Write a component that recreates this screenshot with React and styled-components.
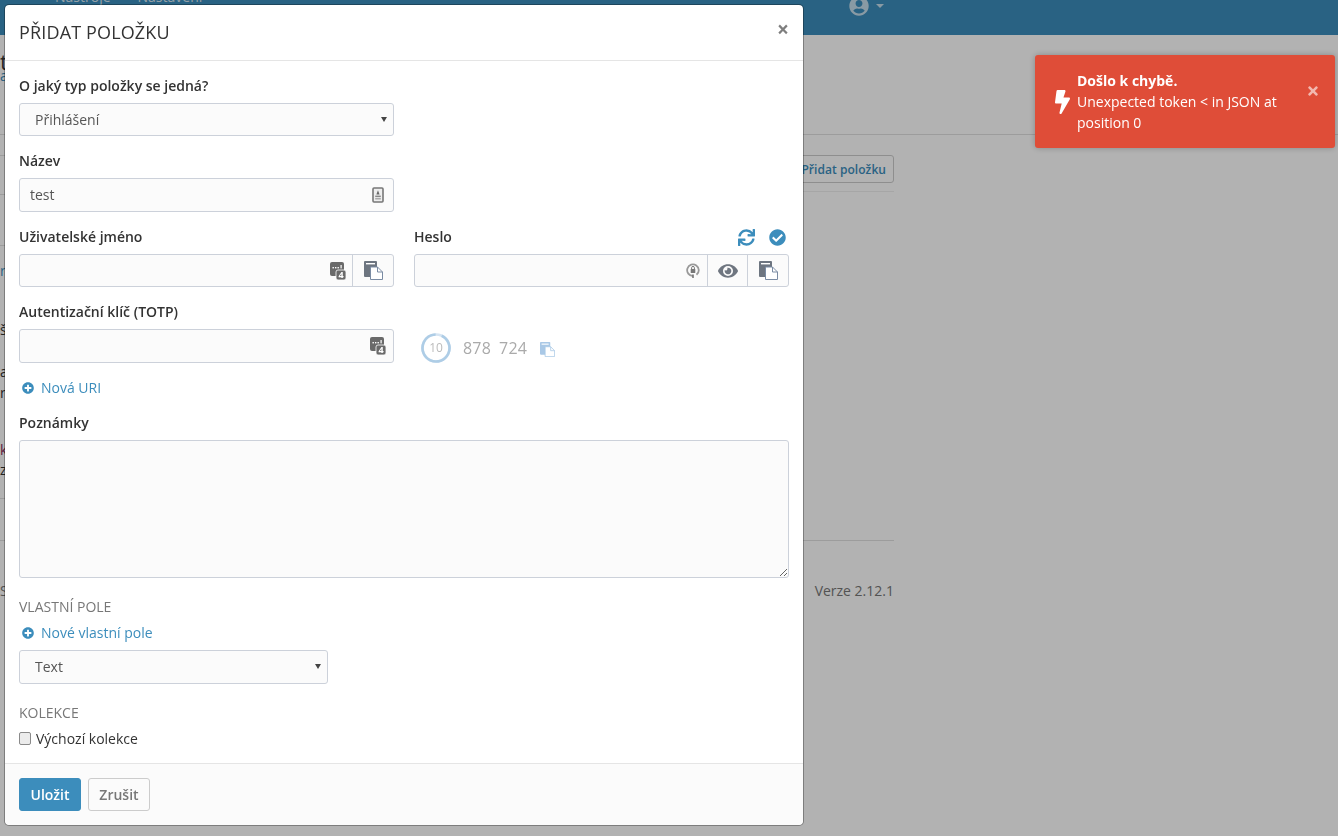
import React from 'react';
import styled, { createGlobalStyle } from 'styled-components';
import { FaSync, FaCheckCircle, FaEye, FaPlusCircle, FaBolt, FaTimes, FaUserCircle } from 'react-icons/fa';

const Global = createGlobalStyle`
  html, body { margin: 0; padding: 0; background: #fff; }
  body { font-family: "Open Sans", "Noto Sans", sans-serif; font-size: 14px; line-height: 20px; color: #333; overflow: hidden; }
  * { box-sizing: border-box; }
`;

const Page = styled.div`width: 1338px; height: 836px; overflow: hidden; display: flex; flex-direction: column;`;
const Nav = styled.nav`
  height: 35px; flex: none; background: #3c8dbc; overflow: hidden; width: 100%;
`;
const NavInner = styled.div`
  width: 894px; display: flex; justify-content: space-between; align-items: flex-start; padding: 0 12px 0 55px;
`;
const NavLinks = styled.div`display: flex; gap: 27px; margin-top: -13px; color: rgba(255,255,255,.8);`;
const UserMenu = styled.div`display: flex; align-items: center; gap: 7px; margin: -4px -2px 0 0; color: rgba(255,255,255,.7); font-size: 20px; height: 20px;`;
const Caret = styled.span`width: 0; height: 0; border-left: 4px solid transparent; border-right: 4px solid transparent; border-top: 4px solid currentColor;`;

const PageHead = styled.header`height: 100px; flex: none; border-bottom: 1px solid #e0e0e0; padding-top: 19px;`;
const HeadTitle = styled.div`font-size: 22px; line-height: 15px; color: #333;`;
const HeadSub = styled.div`font-size: 14px; line-height: 14px; color: #3c8dbc;`;

const Main = styled.main`width: 894px; display: flex; justify-content: space-between;`;
const Rail = styled.div`width: 30px; display: flex; flex-direction: column;`;
const RailRow = styled.div`
  height: ${p => p.$h}px; line-height: ${p => p.$h}px; flex: none; color: ${p => p.$c || '#333'};
  border-bottom: ${p => (p.$line ? '1px solid #e0e0e0' : 'none')};
`;
const Right = styled.div`width: 500px; display: flex; flex-direction: column;`;
const Toolbar = styled.div`height: 57px; padding-top: 20px; border-bottom: 1px solid #eee; display: flex; justify-content: flex-end; align-items: flex-start;`;
const AddBtn = styled.button`
  height: 28px; padding: 0 7px 0 8px; border: 1px solid #ccc; border-radius: 3px; background: transparent;
  font: 600 12px "Open Sans", sans-serif; letter-spacing: .05px; color: #3c8dbc;
`;
const Rule = styled.div`height: 349px; border-bottom: 1px solid #e0e0e0;`;
const Version = styled.div`margin-top: 40px; text-align: right; color: #777;`;

const Backdrop = styled.div`position: fixed; inset: 0; background: rgba(0,0,0,.3);`;
const ModalLayer = styled.div`position: fixed; inset: 0; padding: 4px;`;
const Modal = styled.div`
  width: 800px; height: 822px; background: #fff; border: 1px solid rgba(0,0,0,.3); border-radius: 5px;
  background-clip: padding-box; display: flex; flex-direction: column;
`;
const ModalHead = styled.div`
  height: 56px; flex: none; display: flex; align-items: center; justify-content: space-between;
  padding: 0 14px; border-bottom: 1px solid #e5e5e5;
`;
const Title = styled.h4`margin: -2px 0 0; font-size: 18px; font-weight: 400; line-height: 20px; letter-spacing: .15px; text-transform: uppercase; color: #333;`;
const Close = styled.button`
  border: 0; background: none; padding: 0; font: 700 21px/21px "Open Sans", sans-serif; color: #000; opacity: .5; margin-top: -6px;
`;
const ModalBody = styled.div`flex: 1; padding: 15px 14px 0; display: flex; flex-direction: column; gap: 15px;`;
const Grid = styled.div`display: grid; grid-template-columns: 375px 375px; column-gap: 20px;`;
const Field = styled.div`display: flex; flex-direction: column; gap: 7px;`;
const LabelRow = styled.div`display: flex; justify-content: space-between; align-items: center; height: 20px;`;
const Label = styled.label`font-weight: 600; font-size: 14px; line-height: 20px; color: #333;`;
const TopIcons = styled.div`display: flex; gap: 14px; padding-right: 3px; color: #3c8dbc; font-size: 17px; align-items: center;`;

const Group = styled.div`
  height: ${p => p.$h || 33}px; width: ${p => p.$w ? `${p.$w}px` : '100%'}; display: flex; align-items: stretch;
  padding-bottom: ${p => (p.$h === 34 ? 1 : 0)}px;
  border: 1px solid #ccd1da; border-radius: 3px; background: #fbfbfb; position: relative;
`;
const TextInput = styled.input`
  flex: 1; min-width: 0; border: 0; background: transparent; padding: 0 10px; outline: none;
  font: 14px "Open Sans", sans-serif; color: #555;
`;
const Inset = styled.span`display: flex; align-items: center; padding-right: ${p => p.$pr}px; flex: none;`;
const Addon = styled.button`
  width: ${p => p.$w}px; flex: none; border: 0; border-left: 1px solid #ccd1da; background: transparent; padding: 0;
  display: flex; align-items: center; justify-content: center; color: #6f7680; font-size: 20px;
`;
const SelectEl = styled.select`
  appearance: none; -webkit-appearance: none; flex: 1; border: 0; background: transparent; outline: none;
  padding: 0 15px; font: 14px "Open Sans", sans-serif; color: #555;
`;
const SelectArrow = styled.span`
  position: absolute; right: 6px; top: 50%; margin-top: -3px; width: 0; height: 0; pointer-events: none;
  border-left: 3px solid transparent; border-right: 3px solid transparent; border-top: 5px solid #444;
`;
const TextArea = styled.textarea`
  height: 138px; width: 100%; display: block; border: 1px solid #ccd1da; border-radius: 3px; background: #fbfbfb; outline: none;
  font: 14px "Open Sans", sans-serif; color: #555; padding: 6px 10px;
`;
const Totp = styled.div`display: flex; align-items: center; padding: 4px 0 0 7px; height: 33px; margin-top: 27px; color: #aaa; font-size: 16px;`;
const Digits = styled.div`display: flex; gap: 8px; margin: 1px 13px 0 12px; letter-spacing: .2px;`;
const CopyLight = styled.span`display: flex; margin-top: 3px;`;
const AddLink = styled.a`display: flex; align-items: center; gap: 7px; padding-left: 3px; height: 20px; color: #3c8dbc; font-size: 14px;`;
const PlusIcon = styled(FaPlusCircle)`font-size: 12px;`;
const Caption = styled.div`color: #777; font-size: 14px; line-height: 20px; text-transform: uppercase;`;
const Section = styled.div`display: flex; flex-direction: column; margin-top: 4px; gap: ${p => p.$gap}px;`;
const Inner = styled.div`display: flex; flex-direction: column; gap: 7px;`;
const CheckRow = styled.label`display: flex; align-items: center; gap: 5px; height: 20px; color: #333;`;
const Check = styled.input`
  appearance: none; -webkit-appearance: none; margin: -2px 0 0; width: 12px; height: 13px;
  border: 1px solid #8a8a8a; border-radius: 2px; background: #ececec;
`;
const ModalFoot = styled.div`
  height: 62px; flex: none; padding: 14px 14px 0; display: flex; align-items: flex-start; gap: 7px;
  background: #fbfbfb; border-top: 1px solid #e5e5e5; border-radius: 0 0 5px 5px;
`;
const Btn = styled.button`
  width: 62px; height: 33px; padding: 0; border-radius: 3px; font: 600 14px "Open Sans", sans-serif;
  border: 1px solid ${p => (p.$primary ? '#3c8dbc' : '#ccc')};
  background: ${p => (p.$primary ? '#3c8dbc' : '#fbfbfb')};
  color: ${p => (p.$primary ? '#fff' : '#777')};
`;
const Toast = styled.div`
  position: fixed; left: 1035px; top: 55px; width: 300px; height: 93px; background: #df4d38; border-radius: 3px; color: #fff;
  box-shadow: 0 0 6px rgba(0,0,0,.25); display: flex; align-items: center; padding: 16px 16px 15px 20px;
`;
const ToastIcon = styled(FaBolt)`font-size: 24px; flex: none; width: 15px; margin-right: 7px;`;
const ToastText = styled.div`flex: none; width: 215px; line-height: 21px; margin-top: -2px;`;
const ToastTitle = styled.div`font-weight: 700;`;
const ToastClose = styled(FaTimes)`font-size: 14px; flex: none; opacity: .6; margin: -23px 0 0 14px;`;

const CopyIcon = ({ light }) => {
  const dark = light ? '#a9c8e6' : '#6d7580';
  const line = light ? '#a9c8e6' : '#7a8ba3';
  const w = light ? 15 : 19;
  return (
    <svg width={w} height={w} viewBox="0 0 19 19">
      <path d="M1 0h11a1 1 0 0 1 1 1v15H1a1 1 0 0 1-1-1V1a1 1 0 0 1 1-1z" fill={dark} />
      <rect x="2" y="2" width="9" height="1.4" fill="#fff" />
      <path d="M6.5 6H13.5L18.5 11V18.5H6.5Z" fill="#fff" stroke={line} />
      <path d="M13.5 6V11H18.5" fill="none" stroke={line} />
    </svg>
  );
};
const KeyIcon = () => (
  <svg width="16" height="18" viewBox="0 0 16 18">
    <rect x="0" y="0" width="14" height="14" rx="2" fill="#6a6a6a" />
    <g fill="#fff">
      <rect x="2.5" y="5" width="1.4" height="1.4" /><rect x="5" y="5" width="1.4" height="1.4" />
      <rect x="7.5" y="5" width="1.4" height="1.4" /><rect x="10.5" y="3" width="1.2" height="3.4" />
    </g>
    <rect x="6" y="8" width="10" height="10" rx="2" fill="#6a6a6a" stroke="#fff" strokeWidth=".8" />
    <text x="11" y="16.3" fontSize="9" fontWeight="700" fill="#fff" textAnchor="middle" fontFamily="Open Sans, sans-serif">4</text>
  </svg>
);
const NameIcon = () => (
  <svg width="12" height="16" viewBox="0 0 12 16">
    <rect x="1" y="1" width="10" height="14" rx="1" fill="#eee" stroke="#777" strokeWidth="1.6" />
    <path d="M6 3.2L7.6 7.6H4.4Z" fill="#666" />
    <rect x="3.2" y="8.6" width="5.6" height="1.5" fill="#888" />
    <rect x="3.2" y="11" width="5.6" height="1.5" fill="#aaa" />
  </svg>
);
const PassIcon = () => (
  <svg width="14" height="15" viewBox="0 0 14 15">
    <path d="M7 13A5.8 5.8 0 1 1 10.5 11.8" fill="none" stroke="#999" strokeWidth="1.8" />
    <path d="M7 11.5v3.5" stroke="#777" strokeWidth="1.6" />
    <rect x="4.7" y="6" width="4.6" height="4" rx=".6" fill="#777" />
    <path d="M5.6 6V4.8a1.4 1.4 0 0 1 2.8 0V6" fill="none" stroke="#777" />
  </svg>
);
const Timer = () => (
  <svg width="30" height="30" viewBox="0 0 30 30">
    <circle cx="15" cy="15" r="13.5" fill="none" stroke="#d5e4f2" strokeWidth="2.6" />
    <circle cx="15" cy="15" r="13.5" fill="none" stroke="#aecde6" strokeWidth="2.6" strokeDasharray="78 85" transform="rotate(-65 15 15)" />
    <text x="15" y="19.4" fontSize="12" fill="#bbb" textAnchor="middle" fontFamily="Open Sans, sans-serif">10</text>
  </svg>
);

const railRows = [
  { h: 21, line: true }, { h: 39, line: true }, { h: 51, line: true },
  { h: 50, t: 'r', c: '#3c8dbc' }, { h: 68, t: 'š' }, { h: 16, t: 'a' }, { h: 26, t: 'r' },
  { h: 30 }, { h: 28, t: 'k', c: '#8a2b5c' }, { h: 12, t: 'z' }, { h: 23, line: true }, { h: 42, line: true },
  { h: 40 }, { h: 20, t: 'S', c: '#777' },
];

const Select = ({ value, options, h, w }) => (
  <Group $h={h} $w={w}>
    <SelectEl defaultValue={value}>
      {options.map(o => <option key={o}>{o}</option>)}
    </SelectEl>
    <SelectArrow />
  </Group>
);

export default function App() {
  return (
    <>
      <Global />
      <Page>
        <Nav>
          <NavInner>
            <NavLinks><span>Nástroje</span><span>Nastavení</span></NavLinks>
            <UserMenu><FaUserCircle /><Caret /></UserMenu>
          </NavInner>
        </Nav>
        <PageHead>
          <HeadTitle>t</HeadTitle>
          <HeadSub>a</HeadSub>
        </PageHead>
        <Main>
          <Rail>
            {railRows.map((r, i) => <RailRow key={i} $h={r.h} $c={r.c} $line={r.line}>{r.t}</RailRow>)}
          </Rail>
          <Right>
            <Toolbar><AddBtn>Přidat položku</AddBtn></Toolbar>
            <Rule />
            <Version>Verze 2.12.1</Version>
          </Right>
        </Main>
      </Page>
      <Backdrop />
      <ModalLayer>
        <Modal>
          <ModalHead>
            <Title>Přidat položku</Title>
            <Close aria-label="Close">×</Close>
          </ModalHead>
          <ModalBody>
            <Grid>
              <Field>
                <Label>O jaký typ položky se jedná?</Label>
                <Select value="Přihlášení" options={['Přihlášení', 'Karta', 'Identita', 'Zabezpečená poznámka']} />
              </Field>
            </Grid>
            <Grid>
              <Field>
                <Label>Název</Label>
                <Group $h={34}>
                  <TextInput defaultValue="test" />
                  <Inset $pr={9}><NameIcon /></Inset>
                </Group>
              </Field>
            </Grid>
            <Grid>
              <Field>
                <Label>Uživatelské jméno</Label>
                <Group>
                  <TextInput />
                  <Inset $pr={6}><KeyIcon /></Inset>
                  <Addon $w={41}><CopyIcon /></Addon>
                </Group>
              </Field>
              <Field>
                <LabelRow>
                  <Label>Heslo</Label>
                  <TopIcons><FaSync /><FaCheckCircle /></TopIcons>
                </LabelRow>
                <Group>
                  <TextInput />
                  <Inset $pr={7}><PassIcon /></Inset>
                  <Addon $w={40}><FaEye /></Addon>
                  <Addon $w={41}><CopyIcon /></Addon>
                </Group>
              </Field>
            </Grid>
            <Grid>
              <Field>
                <Label>Autentizační klíč (TOTP)</Label>
                <Group $h={34}>
                  <TextInput />
                  <Inset $pr={7}><KeyIcon /></Inset>
                </Group>
              </Field>
              <Totp>
                <Timer />
                <Digits><span>878</span><span>724</span></Digits>
                <CopyLight><CopyIcon light /></CopyLight>
              </Totp>
            </Grid>
            <AddLink><PlusIcon />Nová URI</AddLink>
            <Field>
              <Label>Poznámky</Label>
              <TextArea />
            </Field>
            <Section $gap={6}>
              <Caption>Vlastní pole</Caption>
              <Inner>
                <AddLink><PlusIcon />Nové vlastní pole</AddLink>
                <Select value="Text" options={['Text', 'Skrytý', 'Boolean']} h={34} w={309} />
              </Inner>
            </Section>
            <Section $gap={6}>
              <Caption>Kolekce</Caption>
              <CheckRow><Check type="checkbox" />Výchozí kolekce</CheckRow>
            </Section>
          </ModalBody>
          <ModalFoot>
            <Btn $primary>Uložit</Btn>
            <Btn>Zrušit</Btn>
          </ModalFoot>
        </Modal>
      </ModalLayer>
      <Toast>
        <ToastIcon />
        <ToastText>
          <ToastTitle>Došlo k chybě.</ToastTitle>
          Unexpected token &lt; in JSON at position 0
        </ToastText>
        <ToastClose />
      </Toast>
    </>
  );
}
